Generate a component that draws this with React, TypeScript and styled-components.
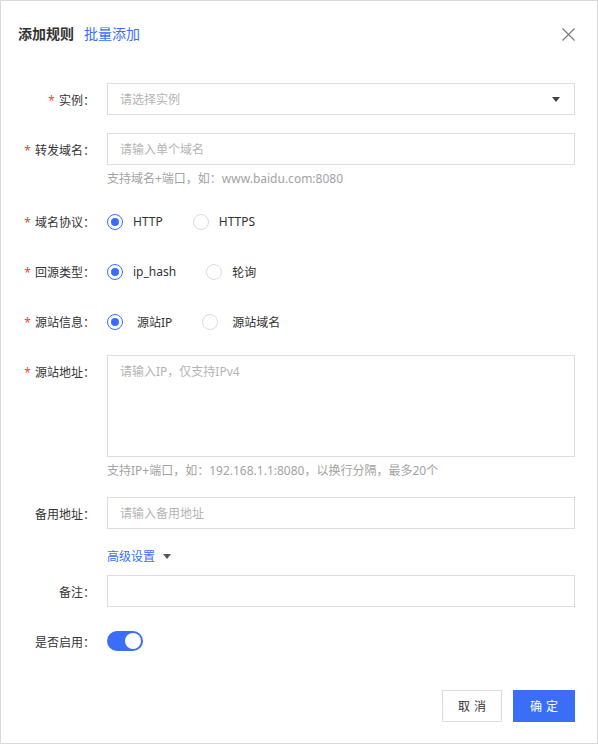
import styled, { createGlobalStyle } from 'styled-components';

const FONT = '"Noto Sans", "Noto Sans CJK SC", sans-serif';

const GlobalStyle = createGlobalStyle`
  html, body {
    margin: 0;
    padding: 0;
    background: #fff;
  }
  * {
    box-sizing: border-box;
  }
  body {
    font-family: ${FONT};
    font-size: 12px;
    color: #333;
  }
`;

const BLUE = '#3a6ef6';

const Dialog = styled.div`
  width: 598px;
  height: 744px;
  border: 1px solid #d9d9d9;
  background: #fff;
  display: flex;
  flex-direction: column;
`;

const Header = styled.div`
  height: 66px;
  padding: 0 22px 0 17px;
  display: flex;
  align-items: center;
`;

const Title = styled.span`
  font-size: 14px;
  font-weight: 700;
  color: #333;
  line-height: 20px;
`;

const TitleLink = styled.a`
  margin-left: 10px;
  font-size: 14px;
  color: ${BLUE};
  line-height: 20px;
  cursor: pointer;
`;

const CloseButton = styled.button`
  margin-left: auto;
  width: 14px;
  height: 14px;
  padding: 0;
  border: none;
  background: none;
  display: flex;
  align-items: center;
  justify-content: center;
  cursor: pointer;
`;

const Form = styled.div`
  padding: 16px 22px 0 0;
  display: flex;
  flex-direction: column;
`;

const Row = styled.div<{ $gap?: number }>`
  display: grid;
  grid-template-columns: 94px 1fr;
  column-gap: 12px;
  margin-bottom: ${(p) => (p.$gap ?? 18)}px;
`;

const Label = styled.div`
  height: 32px;
  padding-top: 4px;
  line-height: 28px;
  text-align: right;
  font-size: 12px;
  color: #333;
  white-space: nowrap;
`;

const Star = styled.span`
  color: #f0453a;
  margin-right: 4px;
`;

const Control = styled.div`
  display: flex;
  flex-direction: column;
  min-width: 0;
`;

const Input = styled.input`
  height: 32px;
  width: 100%;
  border: 1px solid #dedede;
  border-radius: 0;
  padding: 0 12px;
  font-family: ${FONT};
  font-size: 12px;
  color: #333;
  outline: none;
  &::placeholder {
    color: #b4b4b4;
  }
`;

const TextArea = styled.textarea`
  height: 102px;
  width: 100%;
  border: 1px solid #dedede;
  border-radius: 0;
  padding: 6px 12px;
  font-family: ${FONT};
  font-size: 12px;
  line-height: 20px;
  resize: none;
  outline: none;
  display: block;
  &::placeholder {
    color: #b4b4b4;
  }
`;

const Select = styled.div`
  height: 32px;
  border: 1px solid #dedede;
  padding: 0 14px 0 12px;
  display: flex;
  align-items: center;
  justify-content: space-between;
  cursor: pointer;
`;

const Placeholder = styled.span`
  color: #b4b4b4;
  font-size: 12px;
`;

const Caret = styled.span<{ $color?: string }>`
  width: 0;
  height: 0;
  border-left: 4px solid transparent;
  border-right: 4px solid transparent;
  border-top: 5px solid ${(p) => p.$color ?? '#444'};
`;

const Help = styled.div`
  padding-top: 5px;
  line-height: 17px;
  font-size: 12px;
  color: #a3a3a3;
  white-space: nowrap;
`;

const RadioGroup = styled.div`
  height: 32px;
  display: flex;
  align-items: center;
  padding-top: 1px;
`;

const RadioItem = styled.label<{ $indent?: boolean }>`
  display: flex;
  align-items: center;
  margin-right: 30px;
  cursor: pointer;
  font-size: 12px;
  color: #333;
  & > span:last-child {
    margin-left: ${(p) => (p.$indent ? 14 : 10)}px;
  }
`;

const RadioCircle = styled.span<{ $checked: boolean }>`
  width: 16px;
  height: 16px;
  border-radius: 50%;
  border: 1px solid ${(p) => (p.$checked ? BLUE : '#dcdcdc')};
  display: flex;
  align-items: center;
  justify-content: center;
  &::after {
    content: '';
    width: 8px;
    height: 8px;
    border-radius: 50%;
    background: ${(p) => (p.$checked ? BLUE : 'transparent')};
  }
`;

const AdvancedLink = styled.div`
  display: flex;
  align-items: center;
  gap: 8px;
  height: 18px;
  color: ${BLUE};
  font-size: 12px;
  cursor: pointer;
`;

const SwitchWrap = styled.div`
  height: 32px;
  display: flex;
  align-items: center;
`;

const Switch = styled.span<{ $on: boolean }>`
  width: 36px;
  height: 20px;
  border-radius: 10px;
  background: ${(p) => (p.$on ? BLUE : '#ccc')};
  display: flex;
  align-items: center;
  justify-content: ${(p) => (p.$on ? 'flex-end' : 'flex-start')};
  padding: 0 2px;
  &::after {
    content: '';
    width: 16px;
    height: 16px;
    border-radius: 50%;
    background: #fff;
  }
`;

const Footer = styled.div`
  margin-top: auto;
  padding: 0 22px 21px;
  display: flex;
  justify-content: flex-end;
  gap: 11px;
`;

const Button = styled.button<{ $primary?: boolean }>`
  height: 32px;
  width: ${(p) => (p.$primary ? 62 : 60)}px;
  padding: 0 0 0 4px;
  border: 1px solid ${(p) => (p.$primary ? BLUE : '#dcdcdc')};
  background: ${(p) => (p.$primary ? BLUE : '#fff')};
  color: ${(p) => (p.$primary ? '#fff' : '#333')};
  font-family: ${FONT};
  font-size: 12px;
  letter-spacing: 4px;
  cursor: pointer;
`;

type RadioOption = { label: string; checked?: boolean; indent?: boolean };

function RadioRow({ options }: { options: RadioOption[] }) {
  return (
    <RadioGroup>
      {options.map((o) => (
        <RadioItem key={o.label} $indent={o.indent}>
          <RadioCircle $checked={!!o.checked} />
          <span>{o.label}</span>
        </RadioItem>
      ))}
    </RadioGroup>
  );
}

function FieldLabel({ text, required }: { text: string; required?: boolean }) {
  return (
    <Label>
      {required && <Star>*</Star>}
      {text}：
    </Label>
  );
}

function App() {
  return (
    <>
      <GlobalStyle />
      <Dialog>
        <Header>
          <Title>添加规则</Title>
          <TitleLink>批量添加</TitleLink>
          <CloseButton aria-label="关闭">
            <svg width="13" height="13" viewBox="0 0 13 13">
              <path d="M0.5 0.5 L12.5 12.5 M12.5 0.5 L0.5 12.5" stroke="#777" strokeWidth="1.1" fill="none" />
            </svg>
          </CloseButton>
        </Header>

        <Form>
          <Row>
            <FieldLabel text="实例" required />
            <Control>
              <Select>
                <Placeholder>请选择实例</Placeholder>
                <Caret />
              </Select>
            </Control>
          </Row>

          <Row>
            <FieldLabel text="转发域名" required />
            <Control>
              <Input placeholder="请输入单个域名" />
              <Help>支持域名+端口，如：www.baidu.com:8080</Help>
            </Control>
          </Row>

          <Row>
            <FieldLabel text="域名协议" required />
            <RadioRow options={[{ label: 'HTTP', checked: true }, { label: 'HTTPS' }]} />
          </Row>

          <Row>
            <FieldLabel text="回源类型" required />
            <RadioRow options={[{ label: 'ip_hash', checked: true }, { label: '轮询' }]} />
          </Row>

          <Row>
            <FieldLabel text="源站信息" required />
            <RadioRow
              options={[
                { label: '源站IP', checked: true, indent: true },
                { label: '源站域名', indent: true },
              ]}
            />
          </Row>

          <Row>
            <FieldLabel text="源站地址" required />
            <Control>
              <TextArea placeholder="请输入IP，仅支持IPv4" />
              <Help>支持IP+端口，如：192.168.1.1:8080，以换行分隔，最多20个</Help>
            </Control>
          </Row>

          <Row>
            <FieldLabel text="备用地址" />
            <Control>
              <Input placeholder="请输入备用地址" />
            </Control>
          </Row>

          <Row $gap={10}>
            <span />
            <AdvancedLink>
              高级设置
              <Caret $color="#555" />
            </AdvancedLink>
          </Row>

          <Row>
            <FieldLabel text="备注" />
            <Control>
              <Input />
            </Control>
          </Row>

          <Row $gap={0}>
            <FieldLabel text="是否启用" />
            <SwitchWrap>
              <Switch $on />
            </SwitchWrap>
          </Row>
        </Form>

        <Footer>
          <Button>取消</Button>
          <Button $primary>确定</Button>
        </Footer>
      </Dialog>
    </>
  );
}

export default App;
